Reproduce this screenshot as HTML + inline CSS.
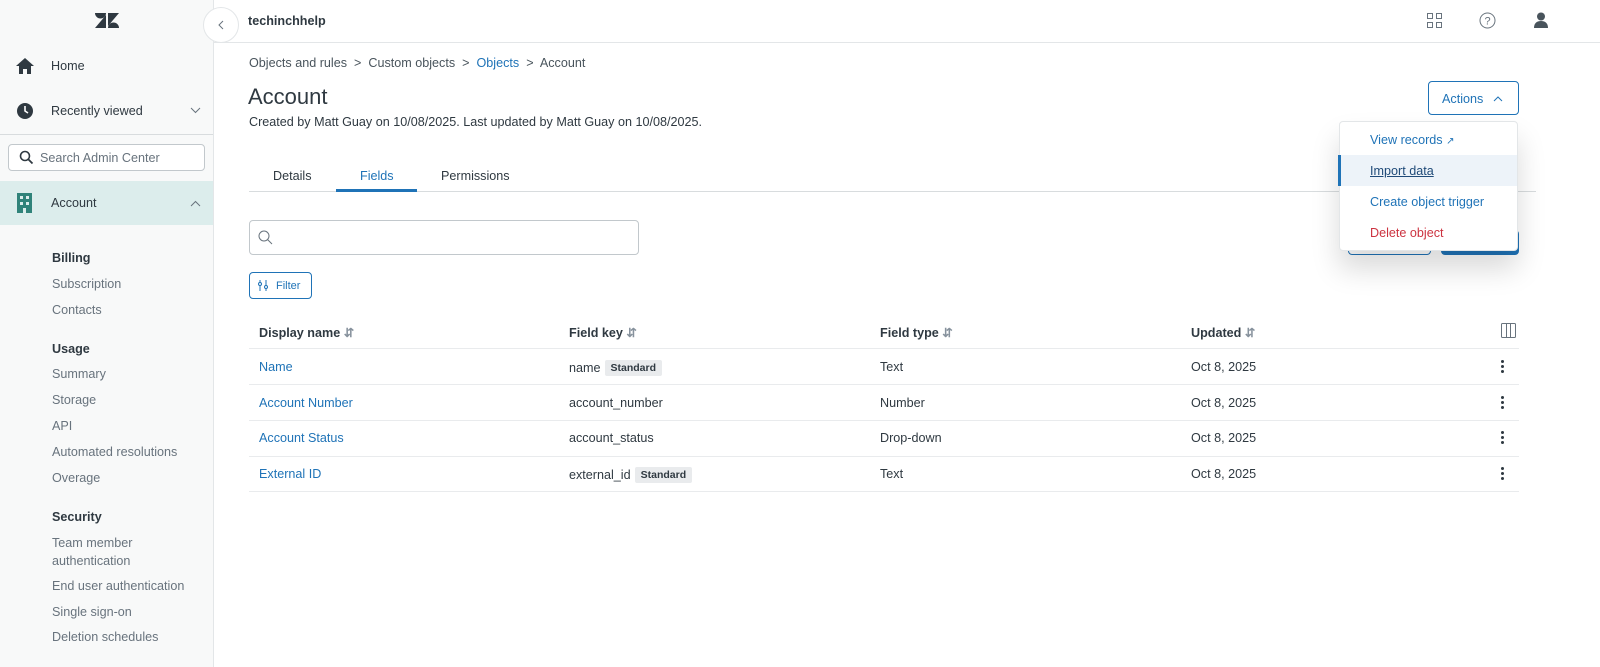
<!DOCTYPE html>
<html><head><meta charset="utf-8"><style>
*{box-sizing:border-box;margin:0;padding:0}
body{width:1600px;height:667px;overflow:hidden;font-family:"Liberation Sans",sans-serif;font-size:12.6px;color:#2f3941;background:#fff;position:relative}
.a{position:absolute;white-space:nowrap}
#side{position:absolute;left:0;top:0;width:214px;height:667px;background:#f8f9f9;border-right:1px solid #e3e6e8}
.sub{color:#68737d;left:52px}
.hd{color:#2f3941;font-weight:bold;left:52px}
.blue{color:#1f73b7}
.row{position:absolute;left:249px;width:1270px;height:1px;background:#e9ebed}
.badge{display:inline-block;background:#e9ebed;font-size:10.5px;font-weight:bold;padding:1px 6px;border-radius:2px;margin-left:4px;color:#2f3941;vertical-align:1px;line-height:14px}
.dots{position:absolute;left:1501px;width:3px}
.dots i{display:block;width:3px;height:3px;border-radius:50%;background:#2f3941;margin-bottom:2px}
</style></head><body>
<div id="side">
<svg class="a" style="left:95px;top:12px" width="24" height="17" viewBox="0 0 24 17"><path d="M11 3L0 16h11z" fill="#2f3941"/><path d="M0 1a5.5 5.5 0 0011 0z" fill="#2f3941"/><path d="M13 1h11L13 14z" fill="#2f3941"/><path d="M13 16a5.5 5.5 0 0111 0z" fill="#2f3941"/></svg>
<svg class="a" style="left:15px;top:57px" width="20" height="18" viewBox="0 0 20 18"><path d="M10 1L1 9h3v8h4v-5h4v5h4V9h3z" fill="#2f3941"/></svg>
<div class="a" style="left:51px;top:59px">Home</div>
<svg class="a" style="left:16px;top:102px" width="18" height="18" viewBox="0 0 18 18"><circle cx="9" cy="9" r="8" fill="#2f3941"/><path d="M9 4v5l3 2" stroke="#fff" stroke-width="1.6" fill="none"/></svg>
<div class="a" style="left:51px;top:104px">Recently viewed</div>
<svg class="a" style="left:190px;top:107px" width="11" height="7"><path d="M1 1l4.5 4.5L10 1" stroke="#68737d" fill="none"/></svg>
<div class="a" style="left:0;top:134px;width:213px;height:1px;background:#d8dcde"></div>
<div class="a" style="left:8px;top:144px;width:197px;height:27px;border:1px solid #c2c8cc;border-radius:4px;background:#fff"></div>
<svg class="a" style="left:19px;top:150px" width="15" height="15"><circle cx="6" cy="6" r="4.5" stroke="#2f3941" stroke-width="1.6" fill="none"/><path d="M9.5 9.5l4 4" stroke="#2f3941" stroke-width="1.8"/></svg>
<div class="a" style="left:40px;top:151px;color:#68737d">Search Admin Center</div>
<div class="a" style="left:0;top:181px;width:213px;height:44px;background:#dcedec"></div>
<svg class="a" style="left:17px;top:193px" width="15" height="20"><rect width="15" height="20" fill="#30837a"/><rect x="3" y="3" width="3" height="3" fill="#dcedec"/><rect x="9" y="3" width="3" height="3" fill="#dcedec"/><rect x="3" y="9" width="3" height="3" fill="#dcedec"/><rect x="9" y="9" width="3" height="3" fill="#dcedec"/><rect x="6" y="15" width="3" height="5" fill="#dcedec"/></svg>
<div class="a" style="left:51px;top:196px">Account</div>
<svg class="a" style="left:190px;top:200px" width="11" height="7"><path d="M1 6l4.5-4.5L10 6" stroke="#68737d" fill="none"/></svg>
<div class="a hd" style="top:251px">Billing</div>
<div class="a sub" style="top:277px">Subscription</div>
<div class="a sub" style="top:303px">Contacts</div>
<div class="a hd" style="top:342px">Usage</div>
<div class="a sub" style="top:367px">Summary</div>
<div class="a sub" style="top:393px">Storage</div>
<div class="a sub" style="top:419px">API</div>
<div class="a sub" style="top:445px">Automated resolutions</div>
<div class="a sub" style="top:471px">Overage</div>
<div class="a hd" style="top:510px">Security</div>
<div class="a sub" style="top:534px;line-height:18px">Team member<br>authentication</div>
<div class="a sub" style="top:579px">End user authentication</div>
<div class="a sub" style="top:605px">Single sign-on</div>
<div class="a sub" style="top:630px">Deletion schedules</div>
</div>
<div class="a" style="left:214px;top:42px;width:1386px;height:1px;background:#e3e6e8"></div>
<div class="a" style="left:203px;top:7px;width:36px;height:36px;border-radius:50%;border:1px solid #e3e6e8;background:#fff"></div>
<svg class="a" style="left:218px;top:20px" width="6" height="10"><path d="M5 1L1 5l4 4" stroke="#68737d" fill="none"/></svg>
<div class="a" style="left:248px;top:14px;font-weight:bold">techinchhelp</div>
<svg class="a" style="left:1427px;top:13px" width="15" height="15" fill="none" stroke="#68737d"><rect x=".5" y=".5" width="5" height="5"/><rect x="9.5" y=".5" width="5" height="5"/><rect x=".5" y="9.5" width="5" height="5"/><rect x="9.5" y="9.5" width="5" height="5"/></svg>
<svg class="a" style="left:1479px;top:12px" width="17" height="17"><circle cx="8.5" cy="8.5" r="7.5" stroke="#68737d" fill="none"/><text x="8.5" y="12.5" font-size="11" text-anchor="middle" fill="#68737d" font-family="Liberation Sans">?</text></svg>
<svg class="a" style="left:1534px;top:12px" width="14" height="16"><circle cx="7" cy="4.5" r="4" fill="#49545c"/><path d="M0 16c0-5 3-7 7-7s7 2 7 7z" fill="#49545c"/></svg>
<div class="a" style="left:249px;top:56px;color:#49545c">Objects and rules &nbsp;&gt;&nbsp; Custom objects &nbsp;&gt;&nbsp; <span class="blue">Objects</span> &nbsp;&gt;&nbsp; Account</div>
<div class="a" style="left:248px;top:84px;font-size:22px;color:#2f3941">Account</div>
<div class="a" style="left:249px;top:115px">Created by Matt Guay on 10/08/2025. Last updated by Matt Guay on 10/08/2025.</div>
<div class="a" style="left:273px;top:169px">Details</div>
<div class="a blue" style="left:360px;top:169px">Fields</div>
<div class="a" style="left:441px;top:169px">Permissions</div>
<div class="a" style="left:249px;top:191px;width:1287px;height:1px;background:#d8dcde"></div>
<div class="a" style="left:336px;top:189px;width:81px;height:3px;background:#1f73b7"></div>
<div class="a" style="left:249px;top:220px;width:390px;height:35px;border:1px solid #c2c8cc;border-radius:4px"></div>
<svg class="a" style="left:258px;top:230px" width="15" height="15"><circle cx="6" cy="6" r="5" stroke="#68737d" fill="none"/><path d="M9.5 9.5l4.5 4.5" stroke="#68737d"/></svg>
<div class="a" style="left:249px;top:272px;width:63px;height:27px;border:1px solid #1f73b7;border-radius:4px"></div>
<svg class="a" style="left:258px;top:280px" width="10" height="11" stroke="#1f73b7" fill="none"><path d="M2 0v11M8 0v11"/><circle cx="2" cy="4" r="1.5" fill="#fff"/><circle cx="8" cy="7" r="1.5" fill="#fff"/></svg>
<div class="a blue" style="left:276px;top:280px;font-size:11px">Filter</div>
<div class="a" style="left:1348px;top:230px;width:83px;height:25px;border:1px solid #1f73b7;border-radius:4px"></div>
<div class="a" style="left:1441px;top:230px;width:78px;height:25px;background:#1f73b7;border-radius:4px"></div>
<div class="a" style="left:259px;top:325px;font-weight:bold">Display name <span style="color:#87929d">&#8693;</span></div>
<div class="a" style="left:569px;top:325px;font-weight:bold">Field key <span style="color:#87929d">&#8693;</span></div>
<div class="a" style="left:880px;top:325px;font-weight:bold">Field type <span style="color:#87929d">&#8693;</span></div>
<div class="a" style="left:1191px;top:325px;font-weight:bold">Updated <span style="color:#87929d">&#8693;</span></div>
<svg class="a" style="left:1501px;top:323px" width="15" height="15" stroke="#68737d" fill="none"><rect x=".5" y=".5" width="14" height="14" rx="1"/><path d="M5.5 0v15M9.5 0v15"/></svg>
<div class="row" style="top:348px"></div><div class="row" style="top:384px"></div><div class="row" style="top:420px"></div><div class="row" style="top:456px"></div><div class="row" style="top:491px"></div>
<div class="a blue" style="left:259px;top:360px">Name</div><div class="a" style="left:569px;top:360px">name<span class="badge">Standard</span></div><div class="a" style="left:880px;top:360px">Text</div><div class="a" style="left:1191px;top:360px">Oct 8, 2025</div>
<div class="a blue" style="left:259px;top:396px">Account Number</div><div class="a" style="left:569px;top:396px">account_number</div><div class="a" style="left:880px;top:396px">Number</div><div class="a" style="left:1191px;top:396px">Oct 8, 2025</div>
<div class="a blue" style="left:259px;top:431px">Account Status</div><div class="a" style="left:569px;top:431px">account_status</div><div class="a" style="left:880px;top:431px">Drop-down</div><div class="a" style="left:1191px;top:431px">Oct 8, 2025</div>
<div class="a blue" style="left:259px;top:467px">External ID</div><div class="a" style="left:569px;top:467px">external_id<span class="badge">Standard</span></div><div class="a" style="left:880px;top:467px">Text</div><div class="a" style="left:1191px;top:467px">Oct 8, 2025</div>
<div class="dots" style="top:360px"><i></i><i></i><i></i></div><div class="dots" style="top:396px"><i></i><i></i><i></i></div><div class="dots" style="top:431px"><i></i><i></i><i></i></div><div class="dots" style="top:467px"><i></i><i></i><i></i></div>
<div class="a" style="left:1428px;top:81px;width:91px;height:34px;border:1px solid #1f73b7;border-radius:4px"></div>
<div class="a blue" style="left:1442px;top:92px">Actions</div>
<svg class="a" style="left:1493px;top:96px" width="10" height="6"><path d="M1 5l4-4 4 4" stroke="#1f73b7" fill="none"/></svg>
<div class="a" style="left:1339px;top:121px;width:179px;height:130px;background:#fff;border:1px solid #e3e6e8;border-radius:4px;box-shadow:0 18px 28px rgba(0,0,0,.15)"></div>
<div class="a" style="left:1340px;top:155px;width:177px;height:31px;background:#edf3f9"></div>
<div class="a" style="left:1338px;top:155px;width:3px;height:31px;background:#1f73b7"></div>
<div class="a blue" style="left:1370px;top:133px">View records <span style="font-size:10px">&#8599;</span></div>
<div class="a" style="left:1370px;top:164px;color:#1f4a78;text-decoration:underline">Import data</div>
<div class="a blue" style="left:1370px;top:195px">Create object trigger</div>
<div class="a" style="left:1370px;top:226px;color:#cc3340">Delete object</div>
</body></html>
